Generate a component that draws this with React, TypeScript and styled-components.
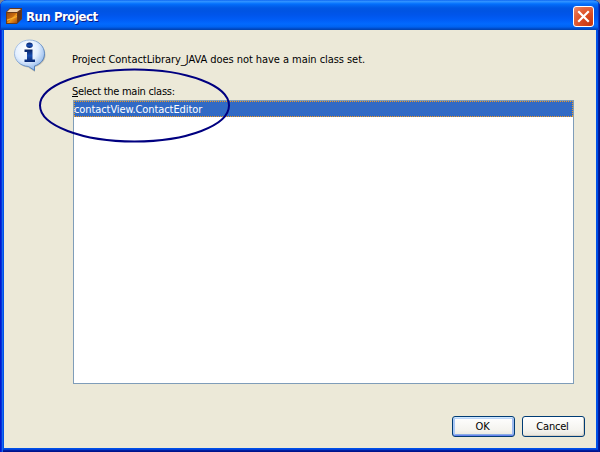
import React from 'react';
import styled, { createGlobalStyle, css } from 'styled-components';

const GlobalStyle = createGlobalStyle`
  * { box-sizing: border-box; }
  body { margin: 0; background: #7d8591; overflow: hidden; }
`;

const Window = styled.div`
  position: relative;
  width: 600px;
  height: 452px;
  display: flex;
  flex-direction: column;
  padding: 0 4px 4px;
  background: #0050e8;
  border-radius: 7px 7px 0 0;
  box-shadow: inset 1px 0 #0019cf, inset 2px 0 #0831d9, inset 3px 0 #166aee,
    inset -1px 0 #00138c, inset -2px 0 #001ea0, inset 0 -1px #00138c, inset 0 -2px #001ea0, inset 0 -3px #0441d8;
  font: 11px/13px 'DejaVu Sans Condensed', 'DejaVu Sans', sans-serif;
  font-stretch: condensed;
  color: #000;
  overflow: hidden;
`;

const TitleBar = styled.header`
  height: 30px;
  flex: none;
  margin: 0 -4px;
  padding: 0 6px;
  display: flex;
  align-items: center;
  background: linear-gradient(#0058ee 0, #3593ff 1px, #288eff 2px, #127dff 3px, #036ffc 4px, #0262ee 6px,
    #0057e5 8px, #0054e3 11px, #0055eb 15px, #005bf5 19px, #026afe 24px, #0062ef 27px, #0052d6 28px, #0040ab 30px);
  box-shadow: inset 1px 0 #0034c8, inset -1px 0 #001ea0, inset -2px 0 #0038cc;
`;

const Title = styled.h1`
  flex: 1;
  margin: 3px 0 0 4px;
  font: bold 13px/16px 'DejaVu Sans Condensed', 'DejaVu Sans', sans-serif;
  font-stretch: condensed;
  letter-spacing: -0.45px;
  color: #fff;
  text-shadow: 1px 1px #0a1883;
`;

const TitleIcon = styled.svg`
  display: block;
  margin-top: 2px;
`;

const CloseButton = styled.button`
  width: 21px;
  height: 21px;
  margin: 3px 0 0;
  padding: 0;
  border: 1px solid #fff;
  border-radius: 3px;
  background: radial-gradient(circle at 85% 90%, #c93810 0, #dc4c22 45%, #e46943 75%, #ec8f73 100%);
  svg { display: block; }
`;

const Content = styled.main`
  flex: 1;
  display: flex;
  flex-direction: column;
  background: #ece9d8;
  padding: 8px 11px 11px 10px;
`;

const Body = styled.div`
  display: flex;
  gap: 26px;
`;

const InfoIcon = styled.svg`
  display: block;
  flex: none;
`;

const Form = styled.div`
  width: 502px;
  display: flex;
  flex-direction: column;
  padding-top: 15px;
`;

const Text = styled.div<{ $spacing: number }>`
  height: 13px;
  white-space: nowrap;
  letter-spacing: ${(p) => p.$spacing}px;
  margin-bottom: 19px;
  u { text-decoration: underline; text-underline-offset: 1px; text-decoration-thickness: 1px; text-decoration-skip-ink: none; }
`;

const ListLabel = styled(Text)`
  margin-bottom: 2px;
`;

const List = styled.div`
  margin-left: 1px;
  width: 501px;
  height: 284px;
  background: #fff;
  border: 1px solid #7f9db9;
`;

const dash = '#f09a22 0 1px, #316ac5 1px 2px';

const ListRow = styled.div`
  height: 16px;
  padding-top: 1px;
  line-height: 15px;
  white-space: nowrap;
  color: #fff;
  letter-spacing: -0.09px;
  background-color: #316ac5;
  background-image:
    repeating-linear-gradient(90deg, ${dash}),
    repeating-linear-gradient(90deg, ${dash}),
    repeating-linear-gradient(180deg, ${dash}),
    repeating-linear-gradient(180deg, ${dash});
  background-size: 100% 1px, 100% 1px, 1px 100%, 1px 100%;
  background-position: 0 0, 0 15px, 0 0, 498px 0;
  background-repeat: no-repeat;
`;

const Actions = styled.footer`
  margin-top: auto;
  display: flex;
  justify-content: flex-end;
  gap: 7px;
`;

const Button = styled.button<{ $primary?: boolean }>`
  width: 63px;
  height: 21px;
  padding: 0 2px 1px 0;
  border: 1px solid #003c74;
  border-radius: 3px;
  font: inherit;
  font-stretch: condensed;
  letter-spacing: -0.2px;
  color: #000;
  background: linear-gradient(#fff, #f4f3ee 70%, #e8e5dc);
  box-shadow: inset -1px -1px #d6d0c5;
  ${(p) => p.$primary && css`
    box-shadow: inset 0 1px #cee7ff, inset 0 -1px #6982ee, inset 2px 0 #aac8f5, inset -2px 0 #9db9ef,
      inset 0 2px #bcd4f6, inset 0 -2px #89ade4;
  `}
`;

const Highlight = styled.svg`
  position: absolute;
  left: 38px;
  top: 67px;
`;

export default function App() {
  return (
    <>
      <GlobalStyle />
      <Window>
        <TitleBar>
          <TitleIcon width="16" height="16" viewBox="0 0 16 16">
            <defs>
              <linearGradient id="front" x1="0" y1="0" x2="1" y2="1">
                <stop offset="0" stopColor="#9b4a0c" />
                <stop offset=".45" stopColor="#c8690f" />
                <stop offset=".55" stopColor="#f0981d" />
                <stop offset="1" stopColor="#a8480a" />
              </linearGradient>
            </defs>
            <path d="M0 4 4 0H16V11L11 16H0Z" fill="#6b3a18" />
            <path d="M1 4 4 1H15L11 4Z" fill="#f0d2b0" />
            <path d="M1 5H11V15H1Z" fill="url(#front)" />
            <path d="M1 11.500 11 8V9L1 13Z" fill="#f6b030" />
            <path d="M12 5 15 2V11L12 14Z" fill="#623316" />
          </TitleIcon>
          <Title>Run Project</Title>
          <CloseButton aria-label="Close">
            <svg width="19" height="19" viewBox="0 0 19 19">
              <path d="M5 5 14 14M14 5 5 14" stroke="#fff" strokeWidth="2.2" strokeLinecap="square" />
            </svg>
          </CloseButton>
        </TitleBar>
        <Content>
          <Body>
            <InfoIcon width="32" height="34" viewBox="0 0 32 34">
              <defs>
                <radialGradient id="bubble" cx=".4" cy=".3" r=".7">
                  <stop offset="0" stopColor="#fff" />
                  <stop offset=".55" stopColor="#e3efff" />
                  <stop offset="1" stopColor="#8db5ea" />
                </radialGradient>
                <linearGradient id="rim" x1="0" y1="0" x2="1" y2="1">
                  <stop offset="0" stopColor="#c0d3ec" />
                  <stop offset="1" stopColor="#386cae" />
                </linearGradient>
                <linearGradient id="letter" x1="0" y1="0" x2="0" y2="1">
                  <stop offset="0" stopColor="#07205f" />
                  <stop offset=".5" stopColor="#1a50b4" />
                  <stop offset="1" stopColor="#06256e" />
                </linearGradient>
              </defs>
              <path d="M16 3C24.500 3 31.500 9 31.500 17C31.500 23 27 27 21 29V34L14 29.500C7 29 1.500 23.500 1.500 17C1.500 9 8 3 16 3Z" fill="#77736b" opacity=".35" />
              <path d="M15.500 2C24 2 30.500 8 30.500 15.800C30.500 22 26 26.500 20.500 28V32.500L14.500 28.500C6.500 28 .5 22.500 .5 15.800C.5 8 7 2 15.500 2Z" fill="url(#bubble)" stroke="url(#rim)" />
              <ellipse cx="15.500" cy="7.300" rx="3.300" ry="2.700" fill="url(#letter)" />
              <path d="M10.500 11.500H18.500V21.500H21V24H10.500V21.500H13V14H10.500Z" fill="url(#letter)" />
            </InfoIcon>
            <Form>
              <Text $spacing={-0.055}>Project ContactLibrary_JAVA does not have a main class set.</Text>
              <ListLabel $spacing={-0.28}><u>S</u>elect the main class:</ListLabel>
              <List role="listbox">
                <ListRow role="option" aria-selected="true">contactView.ContactEditor</ListRow>
              </List>
            </Form>
          </Body>
          <Actions>
            <Button $primary>OK</Button>
            <Button>Cancel</Button>
          </Actions>
        </Content>
        <Highlight width="193" height="78" viewBox="0 0 193 78">
          <ellipse cx="96.500" cy="38.500" rx="94.500" ry="36" fill="none" stroke="#000080" strokeWidth="2" />
        </Highlight>
      </Window>
    </>
  );
}
